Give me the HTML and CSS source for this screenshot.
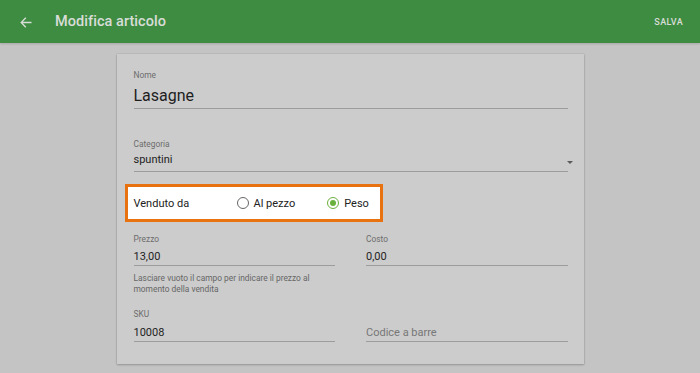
FILE: index.html
```html
<!DOCTYPE html>
<html lang="it">
<head>
<meta charset="utf-8">
<title>Modifica articolo</title>
<link rel="stylesheet" href="styles.css">
</head>
<body>
<header class="appbar">
  <svg class="back" width="12" height="11" viewBox="0 0 12 11"><path d="M11.5 5.5H1.2M5.8 0.8L1.2 5.5l4.6 4.7" fill="none" stroke="currentColor" stroke-width="1.3"/></svg>
  <h1 class="title">Modifica articolo</h1>
  <span class="save">SALVA</span>
</header>
<main class="card">
  <div class="field">
    <div class="label">Nome</div>
    <div class="input big">Lasagne</div>
  </div>
  <div class="field select">
    <div class="label">Categoria</div>
    <div class="input">spuntini</div>
    <span class="arrow"></span>
  </div>
  <div class="sold">
    <span class="sold-label">Venduto da</span>
    <span class="radio-opt"><span class="radio"></span>Al pezzo</span>
    <span class="radio-opt"><span class="radio checked"></span>Peso</span>
  </div>
  <div class="grid first">
    <div class="field">
      <div class="label">Prezzo</div>
      <div class="input">13,00</div>
      <div class="helper">Lasciare vuoto il campo per indicare il prezzo al momento della vendita</div>
    </div>
    <div class="field">
      <div class="label">Costo</div>
      <div class="input">0,00</div>
    </div>
  </div>
  <div class="grid second">
    <div class="field">
      <div class="label">SKU</div>
      <div class="input">10008</div>
    </div>
    <div class="field nolabel">
      <div class="input placeholder">Codice a barre</div>
    </div>
  </div>
</main>
</body>
</html>
```
FILE: styles.css
```css
* { box-sizing: border-box; }
html, body { margin: 0; padding: 0; }
body {
  background: #c4c4c4;
  font-family: Roboto, "Noto Sans", "Liberation Sans", sans-serif;
  width: 700px;
  height: 373px;
  overflow: hidden;
}
.appbar {
  height: 43px;
  background: #3e8c41;
  display: flex;
  align-items: center;
  padding: 0 17px 0 20px;
  color: #d8ddd8;
  box-shadow: 0 1px 2px rgba(0,0,0,0.15);
  position: relative;
}
.back { display: block; margin-top: 1px; }
.title {
  margin: 0 0 0 23px;
  font-size: 14.5px;
  font-weight: 500;
  letter-spacing: 0.05px;
  flex: 1;
}
.save {
  font-size: 9px;
  font-weight: 500;
  letter-spacing: 0.35px;
}
.card {
  width: 467px;
  margin: 11px auto 0;
  background: #cccccc;
  padding: 16px 16px 22px 17px;
  box-shadow: 0 1px 2px rgba(0,0,0,0.22), 0 0 1px rgba(0,0,0,0.25);
}
.field { position: relative; }
.label {
  font-size: 8.4px;
  line-height: 10px;
  color: #6c6c6c;
}
.input {
  margin-top: 6px;
  font-size: 11px;
  line-height: 14px;
  color: #1e1e1e;
  padding-bottom: 1px;
  border-bottom: 1px solid #9c9c9c;
}
.input.big {
  font-size: 16px;
  line-height: 20px;
  padding-bottom: 2px;
}
.select { margin-top: 30px; }
.select .input { margin-top: 4px; padding-bottom: 4px; }
.arrow {
  position: absolute;
  right: -5px;
  top: 22px;
  width: 0;
  height: 0;
  border-left: 3.5px solid transparent;
  border-right: 3.5px solid transparent;
  border-top: 3.5px solid #5a5a5a;
}
.sold {
  margin: 12px 0 0 -9px;
  width: 258px;
  height: 38px;
  border: 3px solid #e8720f;
  background: #ffffff;
  display: flex;
  align-items: center;
  padding-left: 6px;
  font-size: 11px;
  color: #222;
  white-space: nowrap;
}
.sold-label { width: 103px; flex-shrink: 0; }
.radio-opt {
  display: flex;
  align-items: center;
  flex-shrink: 0;
  margin-right: 32px;
}
.radio {
  width: 12px;
  height: 12px;
  flex-shrink: 0;
  border-radius: 50%;
  border: 1.4px solid #666;
  margin-right: 5px;
  position: relative;
}
.radio.checked { border-color: #6bb13e; }
.radio.checked::after {
  content: "";
  position: absolute;
  left: 50%;
  top: 50%;
  width: 6px;
  height: 6px;
  margin: -3px 0 0 -3px;
  border-radius: 50%;
  background: #6bb13e;
}
.grid {
  display: grid;
  grid-template-columns: 1fr 1fr;
  column-gap: 31px;
  align-items: start;
}
.grid.first { margin-top: 12px; }
.grid.second { margin-top: 14px; }
.grid.second .input { margin-top: 7px; }
.grid.second .nolabel .input { margin-top: 17px; }
.placeholder { color: #777; }
.helper {
  margin-top: 7px;
  font-size: 8.4px;
  line-height: 11px;
  color: #666;
}
```
